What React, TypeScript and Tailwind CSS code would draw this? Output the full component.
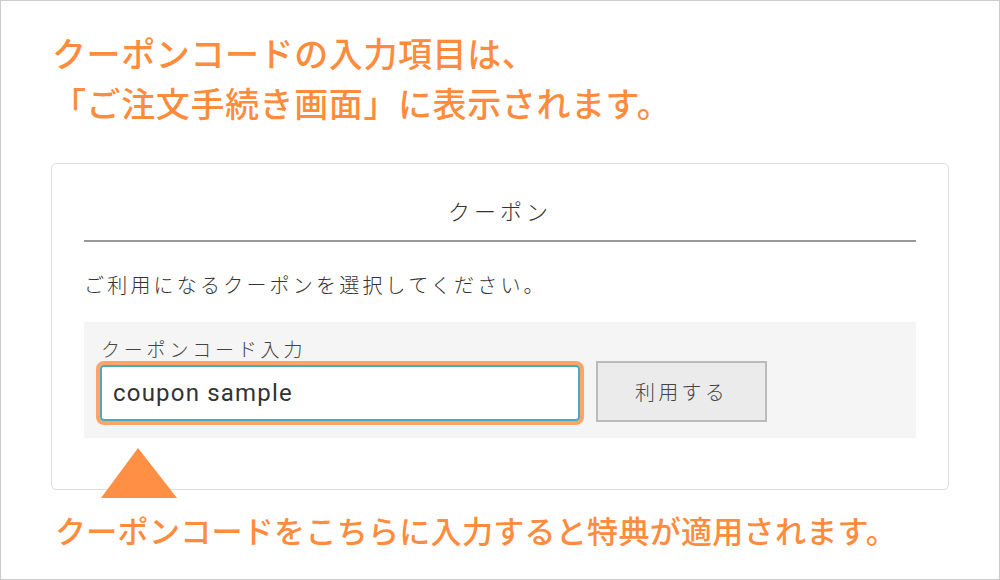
export default function App() {
  const jp = { fontFamily: '"Noto Sans CJK JP", "Noto Sans", sans-serif' };

  return (
    <div
      className="relative w-[1000px] h-[580px] border border-[#cccccc] bg-white overflow-hidden"
      style={jp}
    >
      {/* Heading */}
      <div className="pt-[27px] pl-[51px] text-[34px] leading-[50px] font-medium tracking-[0.6px] text-[#ff8b3d]">
        <p>クーポンコードの入力項目は、</p>
        <p>「ご注文手続き画面」に表示されます。</p>
      </div>

      {/* Coupon card */}
      <div className="mt-[35px] mx-[50px] h-[327px] border border-[#dddddd] rounded-[5px] px-[32px] text-[#333333]">
        <div className="pt-[31px] pb-[15px] border-b-2 border-[#999999] text-center text-[22px] leading-[30px] tracking-[4px] font-light">
          クーポン
        </div>
        <p className="mt-[28px] text-[20px] leading-[30px] tracking-[3.2px] font-light">
          ご利用になるクーポンを選択してください。
        </p>

        <div className="mt-[22px] bg-[#f5f5f5] pl-[12px] pt-[15px] pb-[13px]">
          <p className="pl-[5px] text-[19px] leading-[24px] tracking-[3.8px] font-light text-[#444444]">
            クーポンコード入力
          </p>
          <div className="flex items-start gap-[12px]">
            <div className="w-[488px] border-[4px] border-[#ffa468] rounded-[8px]">
              <div className="h-[56px] flex items-center rounded-[4px] border-2 border-[#4aa8c2] bg-white pl-[11px]">
                <span
                  className="text-[24px] tracking-[1.2px] text-[#333333]"
                  style={{ fontFamily: 'Roboto, "Noto Sans", sans-serif' }}
                >
                  coupon sample
                </span>
              </div>
            </div>
            <button className="w-[171px] h-[61px] bg-[#ebebeb] border-2 border-[#bbbbbb] text-[20px] tracking-[3.3px] font-light text-[#444444]">
              利用する
            </button>
          </div>
        </div>
      </div>

      {/* Pointer triangle over the card edge */}
      <svg className="absolute left-[99px] top-[446px]" width="78" height="52" viewBox="0 0 78 52">
        <polygon points="38,1 77,51 1,51" fill="#ff8f45" />
      </svg>

      {/* Note */}
      <p className="mt-[20px] pl-[54px] text-[31px] leading-[40px] font-medium tracking-[0.3px] text-[#ff8b3d]">
        クーポンコードをこちらに入力すると特典が適用されます。
      </p>
    </div>
  );
}
